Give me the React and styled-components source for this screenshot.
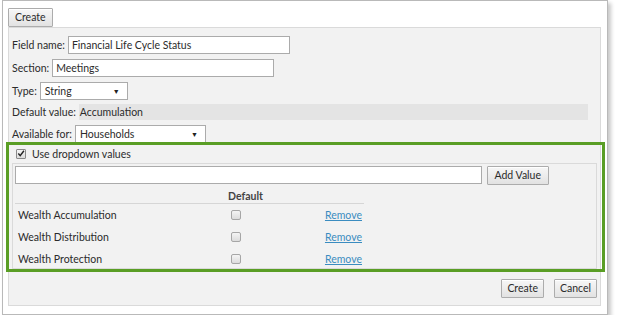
import React from "react";
import styled, { createGlobalStyle } from "styled-components";

const Global = createGlobalStyle`
  html, body { margin: 0; padding: 0; background: #fff; }
  body { font-family: Lato, "Open Sans", sans-serif; font-size: 10.5px; color: #2b2b2b; }
  * { box-sizing: border-box; }
`;

const Frame = styled.div`
  margin-left: 2px;
  width: 606px;
  height: 315px;
  border: 1px solid #b9b9b9;
  background: #fff;
  box-shadow: 3px 3px 4px rgba(0, 0, 0, 0.22);
  padding: 7px 6px 0 5px;
`;

const Button = styled.button`
  display: block;
  font-family: inherit;
  font-size: 10.5px;
  color: #2b2b2b;
  height: ${(p) => p.$h || 19}px;
  padding: 0 ${(p) => p.$px || 6}px;
  border: 1px solid #acacac;
  border-radius: 1px;
  background: linear-gradient(#f7f7f7, #e2e2e2);
  box-shadow: inset 0 1px 0 #fff;
  cursor: pointer;
  line-height: 1;
`;

const Panel = styled.div`
  height: 279px;
  border: 1px solid #dadada;
  background: #f2f2f2;
  padding: 8px 3px 0 3px;
  display: flex;
  flex-direction: column;
`;

const Row = styled.div`
  display: flex;
  align-items: center;
  height: ${(p) => p.$h || 18}px;
  margin-bottom: ${(p) => p.$mb ?? 5}px;
  white-space: nowrap;
`;

const Label = styled.span`
  margin-right: 3px;
`;

const TextInput = styled.div`
  width: ${(p) => p.$w}px;
  height: 18px;
  border: 1px solid #ababab;
  background: #fff;
  padding: 0 3px;
  display: flex;
  align-items: center;
`;

const Select = styled.div`
  width: ${(p) => p.$w}px;
  height: 18px;
  border: 1px solid #ababab;
  background: #fff;
  padding: 0 4px 0 4px;
  display: flex;
  align-items: center;
  justify-content: space-between;
`;

const Arrow = styled.span`
  font-size: 7px;
  color: #222;
  margin-right: 3px;
`;

const ReadValue = styled.span`
  width: 509px;
  height: 16px;
  background: #e4e4e4;
  display: flex;
  align-items: center;
  padding-left: 1px;
`;

const Highlight = styled.div`
  margin: 0 -8px 0 -6px;
  border: 3px solid #5a9e25;
  padding: 0 5px 0 3px;
  height: 130px;
`;

const CheckRow = styled.div`
  display: flex;
  align-items: center;
  height: 17px;
  padding-left: 4px;
  gap: 6px;
`;

const Box = styled.span`
  width: 10px;
  height: 10px;
  border: 1px solid ${(p) => (p.$checked ? "#8a8a8a" : "#a6a6a6")};
  border-radius: ${(p) => (p.$checked ? 1 : 2)}px;
  background: linear-gradient(#f4f4f4, #dcdcdc);
  display: inline-flex;
  align-items: center;
  justify-content: center;
  flex: none;
`;

const SubPanel = styled.div`
  margin-top: 1px;
  height: 106px;
  border: 1px solid #dadada;
  padding: 2px 2px 0 2px;
`;

const AddRow = styled.div`
  display: flex;
  gap: 5px;
  align-items: flex-start;
`;

const Table = styled.div`
  width: 349px;
  margin-top: 3px;
  display: grid;
  grid-template-columns: 212px 37px 100px;
`;

const Head = styled.div`
  height: 16px;
  display: flex;
  align-items: center;
  justify-content: center;
  font-weight: 700;
  color: #444;
  border-bottom: 1px solid #d6d6d6;
`;

const Cell = styled.div`
  height: 22px;
  display: flex;
  align-items: center;
  justify-content: ${(p) => p.$justify || "flex-start"};
  padding: ${(p) => p.$pad || "0 0 0 3px"};
  white-space: nowrap;
`;

const Link = styled.a`
  color: #3a8cc0;
  text-decoration: underline;
  cursor: pointer;
`;

const Footer = styled.div`
  margin-top: 7px;
  display: flex;
  justify-content: flex-end;
  gap: 10px;
`;

const Check = () => (
  <svg width="9" height="9" viewBox="0 0 9 9">
    <path d="M1.5 4.6 L3.6 7 L7.8 1.4" fill="none" stroke="#222" strokeWidth="1.6" />
  </svg>
);

const values = ["Wealth Accumulation", "Wealth Distribution", "Wealth Protection"];

export default function App() {
  return (
    <>
      <Global />
      <Frame>
        <Button $h={19} $px={6}>Create</Button>
        <Panel>
          <Row>
            <Label>Field name:</Label>
            <TextInput $w={222}>Financial Life Cycle Status</TextInput>
          </Row>
          <Row>
            <Label>Section:</Label>
            <TextInput $w={222}>Meetings</TextInput>
          </Row>
          <Row $mb={4}>
            <Label>Type:</Label>
            <Select $w={88}>
              String<Arrow>▼</Arrow>
            </Select>
          </Row>
          <Row $h={16} $mb={5}>
            <Label>Default value:</Label>
            <ReadValue>Accumulation</ReadValue>
          </Row>
          <Row $h={17} $mb={0}>
            <Label>Available for:</Label>
            <Select $w={131}>
              Households<Arrow>▼</Arrow>
            </Select>
          </Row>
          <Highlight>
            <CheckRow>
              <Box $checked>
                <Check />
              </Box>
              Use dropdown values
            </CheckRow>
            <SubPanel>
              <AddRow>
                <TextInput $w={467} />
                <Button $px={6.5}>Add Value</Button>
              </AddRow>
              <Table>
                <Head />
                <Head>Default</Head>
                <Head />
                {values.map((v) => (
                  <React.Fragment key={v}>
                    <Cell>{v}</Cell>
                    <Cell $pad="0 0 0 4px">
                      <Box />
                    </Cell>
                    <Cell $justify="flex-end" $pad="0 2px 0 0">
                      <Link>Remove</Link>
                    </Cell>
                  </React.Fragment>
                ))}
              </Table>
            </SubPanel>
          </Highlight>
          <Footer>
            <Button $px={5}>Create</Button>
            <Button $px={5}>Cancel</Button>
          </Footer>
        </Panel>
      </Frame>
    </>
  );
}
